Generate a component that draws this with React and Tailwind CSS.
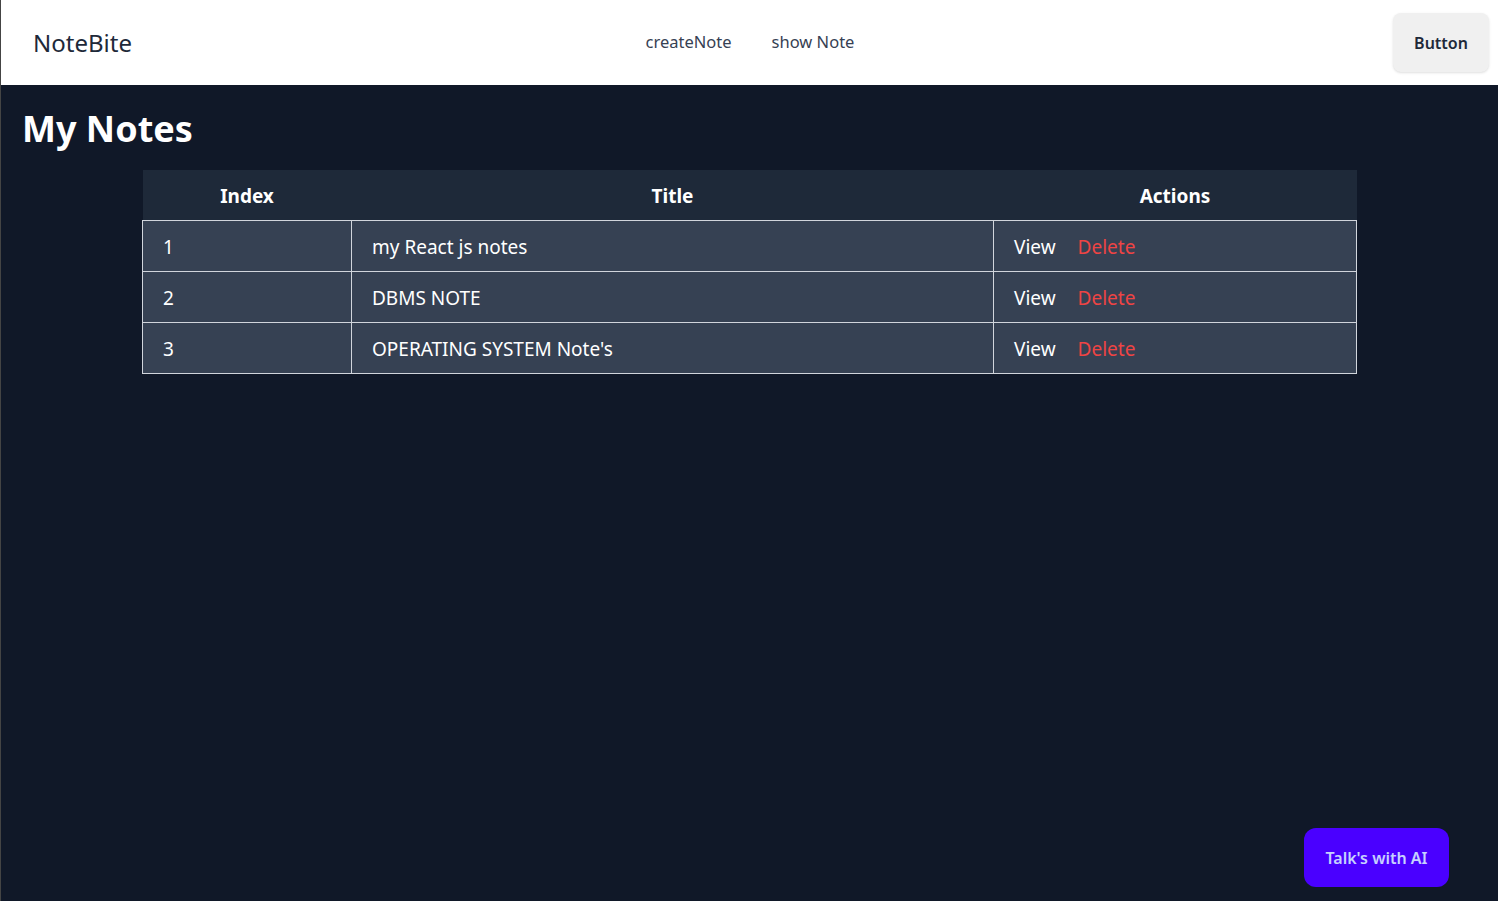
import React from 'react'

const notes = [
  { id: 1, title: 'my React js notes' },
  { id: 2, title: 'DBMS NOTE' },
  { id: 3, title: "OPERATING SYSTEM Note's" },
]

export default function App() {
  return (
    <div
      className="min-h-screen bg-gray-900 border-l border-[#444] flex flex-col"
      style={{ fontFamily: '"Noto Sans", "Open Sans", sans-serif' }}
    >
      {/* Navbar */}
      <header className="h-[85px] bg-white flex items-center pl-8 pr-[9px]">
        <div className="flex-1 text-[24px] text-gray-800">NoteBite</div>
        <nav className="flex gap-10 text-[16.5px] text-gray-700 mr-[22px]">
          <a href="#">createNote</a>
          <a href="#">show Note</a>
        </nav>
        <div className="flex-1 flex justify-end">
          <button className="w-[96px] h-[59px] bg-[#f0f0f0] rounded-lg shadow-sm text-[16px] font-semibold text-gray-800">
            Button
          </button>
        </div>
      </header>

      {/* Main */}
      <main className="flex-1 px-[21px] pt-[20px]">
        <h1 className="text-[36px] font-bold text-white leading-[48px]">My Notes</h1>
        <div className="mt-[17px] flex justify-center">
          <table className="w-[1215px] border-collapse text-[19px] text-white">
            <thead>
              <tr className="bg-gray-800 h-[50px]">
                <th className="w-[209px] font-bold pt-[2px]">Index</th>
                <th className="w-[642px] font-bold pt-[2px]">Title</th>
                <th className="font-bold pt-[2px]">Actions</th>
              </tr>
            </thead>
            <tbody>
              {notes.map((n) => (
                <tr key={n.id} className="bg-gray-700 h-[51px]">
                  <td className="border border-gray-300 px-5 pt-1">{n.id}</td>
                  <td className="border border-gray-300 px-5 pt-1">{n.title}</td>
                  <td className="border border-gray-300 px-5 pt-1">
                    <span className="mr-[22px]">View</span>
                    <span className="text-[#ef4444]">Delete</span>
                  </td>
                </tr>
              ))}
            </tbody>
          </table>
        </div>
      </main>

      {/* Floating AI button */}
      <button className="fixed right-[49px] bottom-[14px] w-[145px] h-[59px] rounded-xl bg-[#4a00ff] text-indigo-200 font-semibold text-[16px]">
        Talk's with AI
      </button>
    </div>
  )
}
